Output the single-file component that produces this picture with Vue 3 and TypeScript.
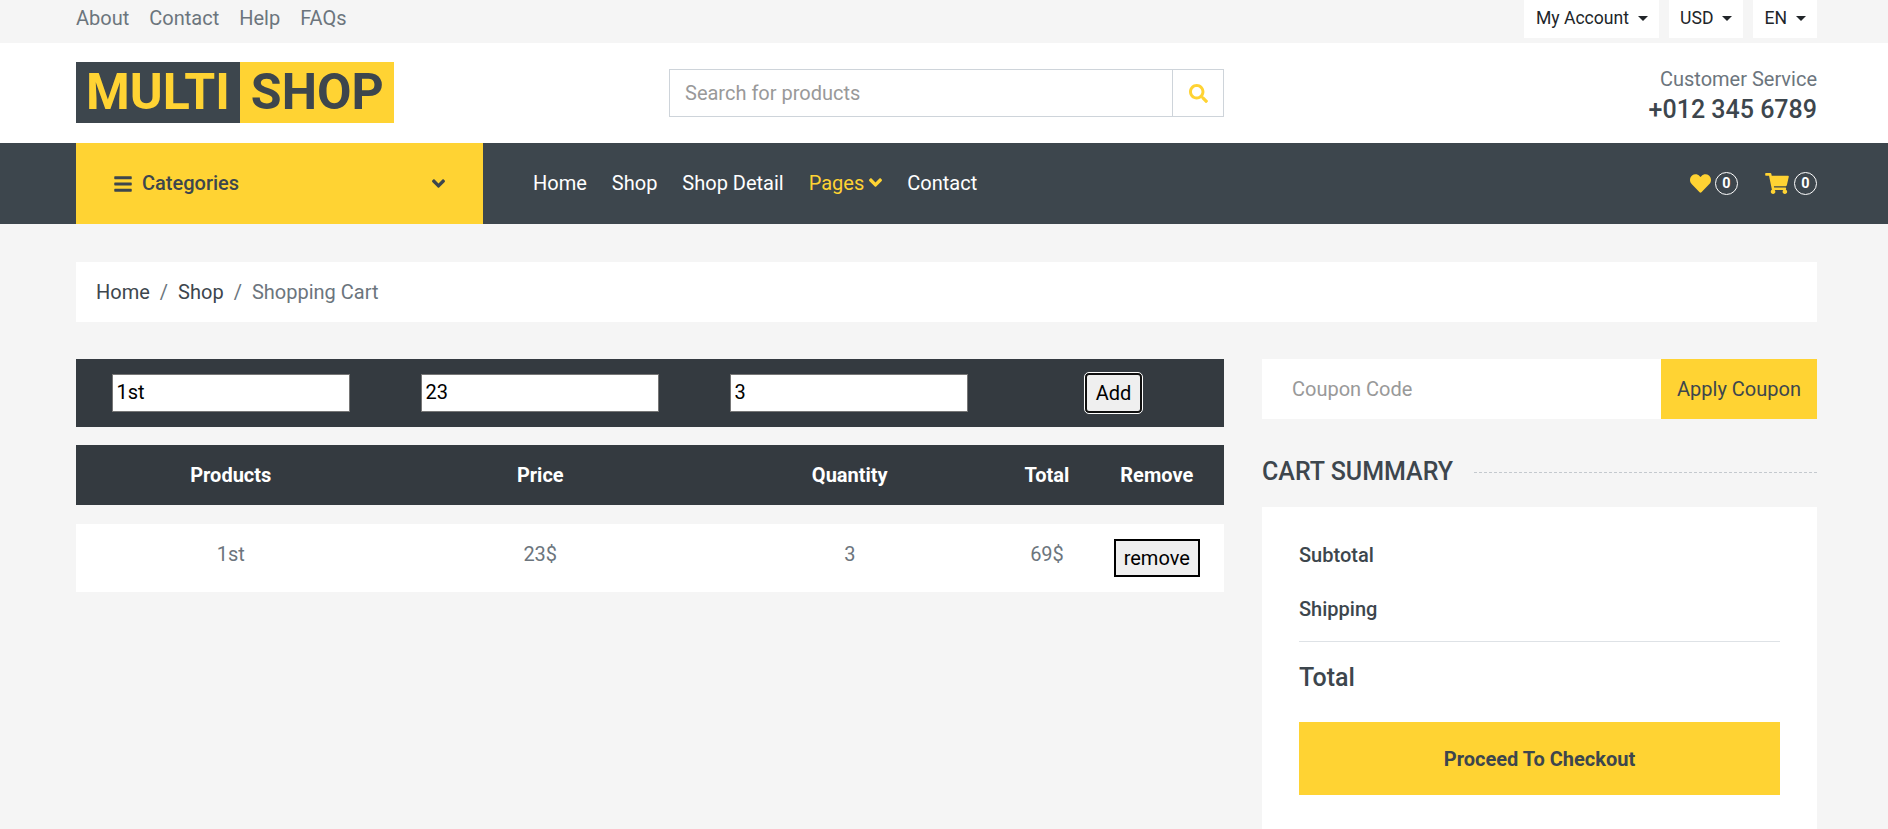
<template>
  <div class="page">
    <div class="topbar">
      <div class="top-links">
        <a v-for="link in topLinks" :key="link">{{ link }}</a>
      </div>
      <div class="top-menus">
        <button v-for="menu in topMenus" :key="menu" class="top-btn">
          {{ menu }}<span class="caret"></span>
        </button>
      </div>
    </div>

    <header class="header">
      <div class="logo">
        <span class="logo-dark">MULTI</span><span class="logo-yellow">SHOP</span>
      </div>
      <div class="search">
        <input class="search-input" placeholder="Search for products" />
        <span class="search-btn">
          <svg class="search-icon" viewBox="0 0 512 512"><path fill="currentColor" d="M505 442.7L405.3 343c-4.5-4.5-10.6-7-17-7H372c27.6-35.3 44-79.7 44-128C416 93.1 322.9 0 208 0S0 93.1 0 208s93.1 208 208 208c48.3 0 92.7-16.4 128-44v16.3c0 6.4 2.5 12.5 7 17l99.7 99.7c9.4 9.4 24.6 9.4 33.9 0l28.3-28.3c9.4-9.4 9.4-24.6.1-34zM208 336c-70.7 0-128-57.2-128-128 0-70.7 57.2-128 128-128 70.7 0 128 57.2 128 128 0 70.7-57.2 128-128 128z" /></svg>
        </span>
      </div>
      <div class="service">
        <p class="service-label">Customer Service</p>
        <p class="service-phone">+012 345 6789</p>
      </div>
    </header>

    <nav class="navbar">
      <div class="categories">
        <svg class="bars" viewBox="0 0 448 512"><path fill="currentColor" d="M16 132h416c8.837 0 16-7.163 16-16V76c0-8.837-7.163-16-16-16H16C7.163 60 0 67.163 0 76v40c0 8.837 7.163 16 16 16zm0 160h416c8.837 0 16-7.163 16-16v-40c0-8.837-7.163-16-16-16H16c-8.837 0-16 7.163-16 16v40c0 8.837 7.163 16 16 16zm0 160h416c8.837 0 16-7.163 16-16v-40c0-8.837-7.163-16-16-16H16c-8.837 0-16 7.163-16 16v40c0 8.837 7.163 16 16 16z" /></svg>
        <span class="categories-text">Categories</span>
        <svg class="angle" viewBox="0 0 320 512"><path fill="currentColor" d="M143 352.3L7 216.3c-9.4-9.4-9.4-24.6 0-33.9l22.6-22.6c9.4-9.4 24.6-9.4 33.9 0l96.4 96.4 96.4-96.4c9.4-9.4 24.6-9.4 33.9 0l22.6 22.6c9.4 9.4 9.4 24.6 0 33.9l-136 136c-9.2 9.4-24.4 9.4-33.8 0z" /></svg>
      </div>
      <div class="nav-links">
        <a>Home</a>
        <a>Shop</a>
        <a>Shop Detail</a>
        <a class="active">
          Pages
          <svg class="angle" viewBox="0 0 320 512"><path fill="currentColor" d="M143 352.3L7 216.3c-9.4-9.4-9.4-24.6 0-33.9l22.6-22.6c9.4-9.4 24.6-9.4 33.9 0l96.4 96.4 96.4-96.4c9.4-9.4 24.6-9.4 33.9 0l22.6 22.6c9.4 9.4 9.4 24.6 0 33.9l-136 136c-9.2 9.4-24.4 9.4-33.8 0z" /></svg>
        </a>
        <a>Contact</a>
      </div>
      <div class="nav-icons">
        <span class="nav-icon">
          <svg class="heart" viewBox="0 0 512 512"><path fill="currentColor" d="M462.3 62.6C407.5 15.9 326 24.3 275.7 76.2L256 96.5l-19.7-20.3C186.1 24.3 104.5 15.9 49.7 62.6c-62.8 53.6-66.1 149.8-9.9 207.9l193.5 199.8c12.5 12.9 32.8 12.9 45.3 0l193.5-199.8c56.3-58.1 53-154.3-9.8-207.9z" /></svg>
          <span class="badge">0</span>
        </span>
        <span class="nav-icon">
          <svg class="cart-icon" viewBox="0 0 576 512"><path fill="currentColor" d="M528.12 301.319l47.273-208C578.806 78.301 567.391 64 551.99 64H159.208l-9.166-44.81C147.758 8.021 137.93 0 126.529 0H24C10.745 0 0 10.745 0 24v16c0 13.255 10.745 24 24 24h69.883l70.248 343.435C147.325 417.1 136 435.222 136 456c0 30.928 25.072 56 56 56s56-25.072 56-56c0-15.674-6.447-29.835-16.824-40h209.647C430.447 426.165 424 440.326 424 456c0 30.928 25.072 56 56 56s56-25.072 56-56c0-22.172-12.888-41.332-31.579-50.405l5.517-24.276c3.413-15.018-8.002-29.319-23.403-29.319H218.117l-6.545-32h293.145c11.206 0 20.92-7.754 23.403-18.681z" /></svg>
          <span class="badge">0</span>
        </span>
      </div>
    </nav>

    <div class="breadcrumb">
      <a>Home</a><span class="sep">/</span><a>Shop</a><span class="sep">/</span><span class="current">Shopping Cart</span>
    </div>

    <main class="content">
      <section class="cart">
        <form class="add-form" @submit.prevent>
          <input v-model="form.name" class="field" />
          <input v-model="form.price" class="field" />
          <input v-model="form.qty" class="field" />
          <button class="add-btn">Add</button>
        </form>

        <div class="table-head">
          <span v-for="col in columns" :key="col">{{ col }}</span>
        </div>

        <div v-for="item in items" :key="item.name" class="table-row">
          <span>{{ item.name }}</span>
          <span>{{ item.price }}$</span>
          <span>{{ item.qty }}</span>
          <span>{{ item.price * item.qty }}$</span>
          <span><button class="remove-btn">remove</button></span>
        </div>
      </section>

      <aside class="side">
        <div class="coupon">
          <input class="coupon-input" placeholder="Coupon Code" />
          <button class="coupon-btn">Apply Coupon</button>
        </div>

        <h5 class="summary-title"><span>CART SUMMARY</span></h5>

        <div class="summary">
          <h6 class="summary-line">Subtotal</h6>
          <h6 class="summary-line shipping">Shipping</h6>
          <div class="summary-total">Total</div>
          <button class="checkout">Proceed To Checkout</button>
        </div>
      </aside>
    </main>
  </div>
</template>

<script setup lang="ts">
import { reactive, ref } from "vue";

interface CartItem {
  name: string;
  price: number;
  qty: number;
}

const topLinks = ["About", "Contact", "Help", "FAQs"];
const topMenus = ["My Account", "USD", "EN"];
const columns = ["Products", "Price", "Quantity", "Total", "Remove"];

const form = reactive({ name: "1st", price: "23", qty: "3" });
const items = ref<CartItem[]>([{ name: "1st", price: 23, qty: 3 }]);
</script>

<style>
html,
body {
  margin: 0;
  overflow: hidden;
  background: #f5f5f5;
}
</style>

<style scoped>
.page {
  height: 829px;
  overflow: hidden;
  background: #f5f5f5;
  color: #6c757d;
  font-family: Roboto, "Liberation Sans", sans-serif;
  font-size: 20px;
  line-height: 1.5;
}

button,
input {
  font-family: inherit;
}

/* top bar */
.topbar {
  height: 43px;
  display: flex;
  justify-content: space-between;
  padding: 0 71px 0 76px;
}

.top-links {
  display: flex;
  gap: 20px;
  line-height: 36px;
}

.top-menus {
  display: flex;
  gap: 9.5px;
  height: 38px;
}

.top-btn {
  display: flex;
  align-items: center;
  gap: 9px;
  padding: 0 11px 2px 11.5px;
  border: none;
  background: #fff;
  color: #212529;
  font-size: 17.6px;
}

.caret {
  border-top: 5px solid #212529;
  border-left: 5px solid transparent;
  border-right: 5px solid transparent;
}

/* logo row */
.header {
  height: 100px;
  display: flex;
  align-items: center;
  padding: 0 71px 0 76px;
  background: #fff;
}

.logo {
  display: flex;
  width: 593px;
  height: 61px;
  margin-bottom: 1px;
  font-size: 50px;
  font-weight: 700;
  line-height: 61px;
}

.logo-dark {
  padding: 0 10px;
  background: #3d464d;
  color: #ffd333;
}

.logo-yellow {
  padding: 0 10px 0 11px;
  background: #ffd333;
  color: #3d464d;
}

.search {
  display: flex;
  width: 555px;
  height: 48px;
  box-sizing: border-box;
  border: 1px solid #ced4da;
}

.search-input {
  flex: 1;
  min-width: 0;
  padding: 0 15px;
  border: none;
  outline: none;
  font-size: 20px;
}

.search-input::placeholder,
.coupon-input::placeholder {
  color: #999;
}

.search-btn {
  width: 50px;
  display: flex;
  align-items: center;
  justify-content: center;
  border-left: 1px solid #ced4da;
  color: #ffd333;
}

.search-icon {
  width: 19px;
  height: 19px;
}

.service {
  margin-left: auto;
  padding-top: 3px;
  text-align: right;
}

.service-label {
  margin: 0;
  line-height: 29px;
}

.service-phone {
  margin: 0;
  color: #3d464d;
  font-size: 25px;
  font-weight: 500;
  line-height: 31px;
}

/* dark nav */
.navbar {
  height: 81px;
  display: flex;
  align-items: center;
  padding: 0 71px 0 76px;
  background: #3d464d;
}

.categories {
  width: 407px;
  height: 100%;
  box-sizing: border-box;
  display: flex;
  align-items: center;
  padding: 0 38px;
  background: #ffd333;
  color: #3d464d;
}

.bars {
  width: 18px;
  height: 20px;
}

.categories-text {
  margin-left: 10px;
  padding-bottom: 2px;
  font-weight: 500;
}

.categories .angle {
  margin-left: auto;
  width: 13px;
  height: 21px;
}

.nav-links {
  display: flex;
  align-items: center;
  gap: 25px;
  margin-left: 50px;
  padding-bottom: 2px;
  color: #fff;
}

.nav-links .active {
  display: flex;
  align-items: center;
  gap: 5px;
  color: #ffd333;
}

.nav-links .angle {
  width: 13px;
  height: 21px;
}

.nav-icons {
  margin-left: auto;
  display: flex;
  gap: 27px;
  color: #ffd333;
}

.nav-icon {
  display: flex;
  align-items: center;
  gap: 4px;
}

.heart {
  width: 21px;
  height: 21px;
}

.cart-icon {
  width: 24px;
  height: 21px;
  margin-right: 1px;
}

.badge {
  width: 23px;
  height: 23px;
  box-sizing: border-box;
  border: 1px solid #fff;
  border-radius: 50%;
  color: #fff;
  font-size: 14.4px;
  font-weight: 700;
  line-height: 21px;
  text-align: center;
}

/* breadcrumb */
.breadcrumb {
  height: 60px;
  margin: 38px 71px 37px 76px;
  padding: 0 20px;
  display: flex;
  align-items: center;
  background: #fff;
  color: #3d464d;
}

.sep {
  padding: 0 10px;
  color: #6c757d;
}

.current {
  color: #6c757d;
}

/* main */
.content {
  display: grid;
  grid-template-columns: 1148px 555px;
  gap: 38px;
  padding-left: 76px;
}

.add-form {
  height: 68px;
  display: grid;
  grid-template-columns: 309px 309px 309px 1fr;
  align-items: center;
  justify-items: center;
  background: #343a40;
}

.field {
  width: 238px;
  height: 38px;
  box-sizing: border-box;
  padding: 0 4px 2px;
  border: 1.2px solid #767676;
  color: #000;
  font-size: 20px;
}

.add-btn {
  width: 57px;
  height: 40px;
  padding: 0;
  box-sizing: border-box;
  border: 2px solid #101010;
  border-radius: 4px;
  outline: 1px solid #fff;
  background: #efefef;
  color: #000;
  font-size: 20px;
}

.table-head,
.table-row {
  display: grid;
  grid-template-columns: 309.5px 309.5px 309.5px 85px 1fr;
  justify-items: center;
}

.table-head {
  height: 60px;
  margin-top: 18px;
  align-items: center;
  background: #343a40;
  color: #fff;
  font-weight: 700;
}

.table-row {
  height: 68px;
  margin-top: 19px;
  padding-top: 15px;
  box-sizing: border-box;
  background: #fff;
}

.remove-btn {
  display: block;
  width: 86px;
  height: 38px;
  padding: 0;
  box-sizing: border-box;
  border: 2.4px solid #000;
  background: #efefef;
  color: #000;
  font-size: 20px;
}

/* right column */
.coupon {
  display: flex;
  height: 60px;
  background: #fff;
}

.coupon-input {
  flex: 1;
  min-width: 0;
  padding: 0 30px;
  border: none;
  outline: none;
  font-size: 20px;
}

.coupon-btn {
  width: 156px;
  padding: 0;
  border: none;
  background: #ffd333;
  color: #3d464d;
  font-size: 20px;
}

.summary-title {
  display: flex;
  align-items: center;
  height: 36px;
  margin: 35px 0 0;
  color: #3d464d;
  font-size: 25px;
  font-weight: 500;
}

.summary-title::after {
  content: "";
  flex: 1;
  margin-left: 21px;
  border-top: 1px dashed #c4c9ce;
}

.summary {
  margin-top: 17px;
  padding: 35px 37px 60px;
  background: #fff;
}

.summary-line {
  margin: 0;
  color: #3d464d;
  font-size: 20px;
  font-weight: 500;
  line-height: 27px;
}

.shipping {
  margin-top: 27px;
}

.summary-total {
  margin-top: 18px;
  padding-top: 18px;
  border-top: 1px solid #dee2e6;
  color: #3d464d;
  font-size: 25px;
  font-weight: 500;
  line-height: 36px;
}

.checkout {
  display: block;
  width: 100%;
  height: 73px;
  margin-top: 26px;
  padding: 0;
  border: none;
  background: #ffd333;
  color: #3d464d;
  font-size: 20px;
  font-weight: 700;
}
</style>
